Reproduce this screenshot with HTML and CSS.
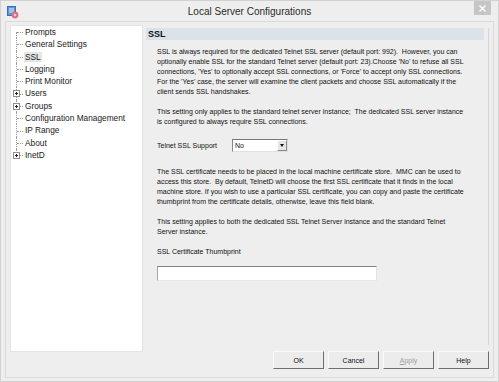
FILE: index.html
```html
<!DOCTYPE html>
<html lang="en">
<head>
  <meta charset="UTF-8">
  <title>Local Server Configurations</title>
  <link rel="stylesheet" href="styles.css">
</head>
<body>

<div class="window">
  <div class="titlebar">
    <div class="app-icon">
      <svg width="12" height="13" viewBox="0 0 12 13">
        <rect x="0.5" y="0.5" width="8" height="9" fill="#5b95d6" stroke="#3a6fb0"/>
        <rect x="2" y="2" width="5" height="5" fill="#9cc3ec"/>
        <circle cx="8" cy="9" r="3.4" fill="#e0707e"/>
        <circle cx="8" cy="9" r="1.3" fill="#f6c9cf"/>
      </svg>
    </div>
    <div class="title">Local Server Configurations</div>
    <div class="title-controls">
      <div class="close-btn">
        <svg width="7" height="7" viewBox="0 0 7 7">
          <path d="M0.5 0.5 L6.5 6.5 M6.5 0.5 L0.5 6.5" stroke="#fff" stroke-width="1.4"/>
        </svg>
      </div>
    </div>
  </div>

  <div class="frame">
    <ul class="tree">
      <li><span>Prompts</span></li>
      <li><span>General Settings</span></li>
      <li><span class="selected">SSL</span></li>
      <li><span>Logging</span></li>
      <li><span>Print Monitor</span></li>
      <li class="has-children"><i class="expander"></i><span>Users</span></li>
      <li class="has-children"><i class="expander"></i><span>Groups</span></li>
      <li><span>Configuration Management</span></li>
      <li><span>IP Range</span></li>
      <li><span>About</span></li>
      <li class="has-children"><i class="expander"></i><span>InetD</span></li>
    </ul>

    <div class="right">
      <div class="panel">
        <div class="panel-header">SSL</div>
        <div class="panel-body">
          <p>SSL is always required for the dedicated Telnet SSL server (default port: 992).&nbsp; However, you can<br>
          optionally enable SSL for the standard Telnet server (default port: 23).Choose 'No' to refuse all SSL<br>
          connections, 'Yes' to optionally accept SSL connections, or 'Force' to accept only SSL connections.<br>
          For the 'Yes' case, the server will examine the client packets and choose SSL automatically if the<br>
          client sends SSL handshakes.</p>

          <p>This setting only applies to the standard telnet server instance;&nbsp; The dedicated SSL server instance<br>
          is configured to always require SSL connections.</p>

          <div class="field-row">
            <label class="field-label">Telnet SSL Support</label>
            <div class="combo">
              <span class="combo-value">No</span>
              <span class="combo-arrow"></span>
            </div>
          </div>

          <p class="after-field">The SSL certificate needs to be placed in the local machine certificate store.&nbsp; MMC can be used to<br>
          access this store.&nbsp; By default, TelnetD will choose the first SSL certificate that it finds in the local<br>
          machine store. If you wish to use a particular SSL certificate, you can copy and paste the certificate<br>
          thumbprint from the certificate details, otherwise, leave this field blank.</p>

          <p>This setting applies to both the dedicated SSL Telnet Server instance and the standard Telnet<br>
          Server instance.</p>

          <div class="thumb-label">SSL Certificate Thumbprint</div>
          <div class="text-input"></div>
        </div>
      </div>

      <div class="buttons">
        <button>OK</button>
        <button>Cancel</button>
        <button class="disabled"><u>A</u>pply</button>
        <button>Help</button>
      </div>
    </div>
  </div>
</div>

</body>
</html>
```

FILE: styles.css
```css
body {
  margin: 0;
  padding: 0;
  background-color: #eeeeee;
  font-family: "Liberation Sans", Arial, sans-serif;
  color: #111;
}

.window {
  width: 499px;
  height: 382px;
  box-sizing: border-box;
  border: 1px solid #d2d2d2;
  background-color: #eeeeee;
  display: flex;
  flex-direction: column;
}

/* Title bar */
.titlebar {
  height: 20px;
  display: grid;
  grid-template-columns: 1fr auto 1fr;
  align-items: center;
  padding: 0 6px 0 6px;
}

.app-icon {
  display: flex;
  align-items: center;
  height: 14px;
  padding-top: 2px;
}

.title {
  font-size: 10px;
  color: #2b2b2b;
  padding-top: 1px;
}

.title-controls {
  display: flex;
  justify-content: flex-end;
  align-self: start;
}

.close-btn {
  width: 17px;
  height: 14px;
  margin-right: 1px;
  background-color: #c6c6c6;
  display: flex;
  align-items: center;
  justify-content: center;
}

/* Main frame */
.frame {
  margin: 0 4px 3px 4px;
  height: 357px;
  box-sizing: border-box;
  border: 1px solid #dadada;
  display: flex;
  align-items: flex-start;
  padding: 0 3px 0 4px;
}

/* Tree */
.tree {
  list-style: none;
  margin: 3px 0 0 0;
  padding: 0;
  width: 133px;
  height: 327px;
  box-sizing: border-box;
  border: 1px solid #e4e4e4;
  background-color: #fff;
  font-size: 8.3px;
  color: #1a1a1a;
}

.tree li {
  position: relative;
  height: 12.3px;
  line-height: 12.3px;
  padding-left: 13px;
  white-space: nowrap;
}

.tree li::before {
  content: "";
  position: absolute;
  left: 5px;
  top: 0;
  bottom: 0;
  border-left: 1px dotted #9a9a9a;
}

.tree li:first-child::before {
  top: 50%;
}

.tree li:last-child::before {
  bottom: 50%;
}

.tree li::after {
  content: "";
  position: absolute;
  left: 6px;
  top: 50%;
  width: 6px;
  border-top: 1px dotted #9a9a9a;
}

.tree span {
  padding: 0 1px;
}

.tree .selected {
  background-color: #e6e6e6;
}

.expander {
  position: absolute;
  left: 2px;
  top: 3px;
  width: 7px;
  height: 7px;
  box-sizing: border-box;
  border: 1px solid #8f8f8f;
  background-color: #fff;
  z-index: 1;
}

.expander::before,
.expander::after {
  content: "";
  position: absolute;
  background-color: #222;
}

.expander::before {
  left: 1px;
  top: 2px;
  width: 3px;
  height: 1px;
}

.expander::after {
  left: 2px;
  top: 1px;
  width: 1px;
  height: 3px;
}

/* Right side */
.right {
  margin-left: 3px;
  padding-top: 6px;
  width: 343px;
  display: flex;
  flex-direction: column;
}

.panel {
  height: 317px;
  padding-right: 4px;
  border-right: 1px solid #d6d6d6;
}

.panel-header {
  height: 12px;
  line-height: 12px;
  background-color: #dbe2ea;
  font-size: 9px;
  font-weight: bold;
  padding-left: 2px;
  color: #111;
}

.panel-body {
  padding: 7px 0 0 11px;
  font-size: 7px;
  line-height: 10px;
  color: #111;
}

.panel-body p {
  margin: 0 0 10px 0;
  white-space: nowrap;
}

.field-row {
  display: flex;
  align-items: center;
  height: 13px;
  margin-top: 12px;
}

.field-label {
  width: 75px;
}

.combo {
  width: 56px;
  height: 13px;
  box-sizing: border-box;
  border: 1px solid;
  border-color: #777 #e0e0e0 #e0e0e0 #888;
  background-color: #fff;
  display: flex;
  align-items: center;
  justify-content: space-between;
}

.combo-value {
  padding-left: 2px;
}

.combo-arrow {
  width: 10px;
  height: 11px;
  box-sizing: border-box;
  background-color: #e6e6e6;
  border: 1px solid;
  border-color: #fff #8a8a8a #8a8a8a #fff;
  position: relative;
}

.combo-arrow::after {
  content: "";
  position: absolute;
  left: 2px;
  top: 3px;
  border-left: 2.5px solid transparent;
  border-right: 2.5px solid transparent;
  border-top: 3px solid #111;
}

.panel-body .after-field {
  margin-top: 15px;
}

.thumb-label {
  margin-top: 7px;
}

.text-input {
  margin-top: 9px;
  width: 220px;
  height: 15px;
  box-sizing: border-box;
  border: 1px solid;
  border-color: #828282 #e2e2e2 #e8e8e8 #a5a5a5;
  background-color: #fff;
}

/* Dialog buttons */
.buttons {
  display: flex;
  justify-content: flex-end;
  gap: 4px;
  margin-top: 6px;
}

button {
  width: 51px;
  height: 18px;
  box-sizing: border-box;
  border: 1px solid;
  border-color: #fafafa #6e6e6e #6e6e6e #fafafa;
  background-color: #ececec;
  font-family: "Liberation Sans", Arial, sans-serif;
  font-size: 7px;
  color: #111;
  padding: 0;
}

button.disabled {
  color: #a0a0a0;
}
```
